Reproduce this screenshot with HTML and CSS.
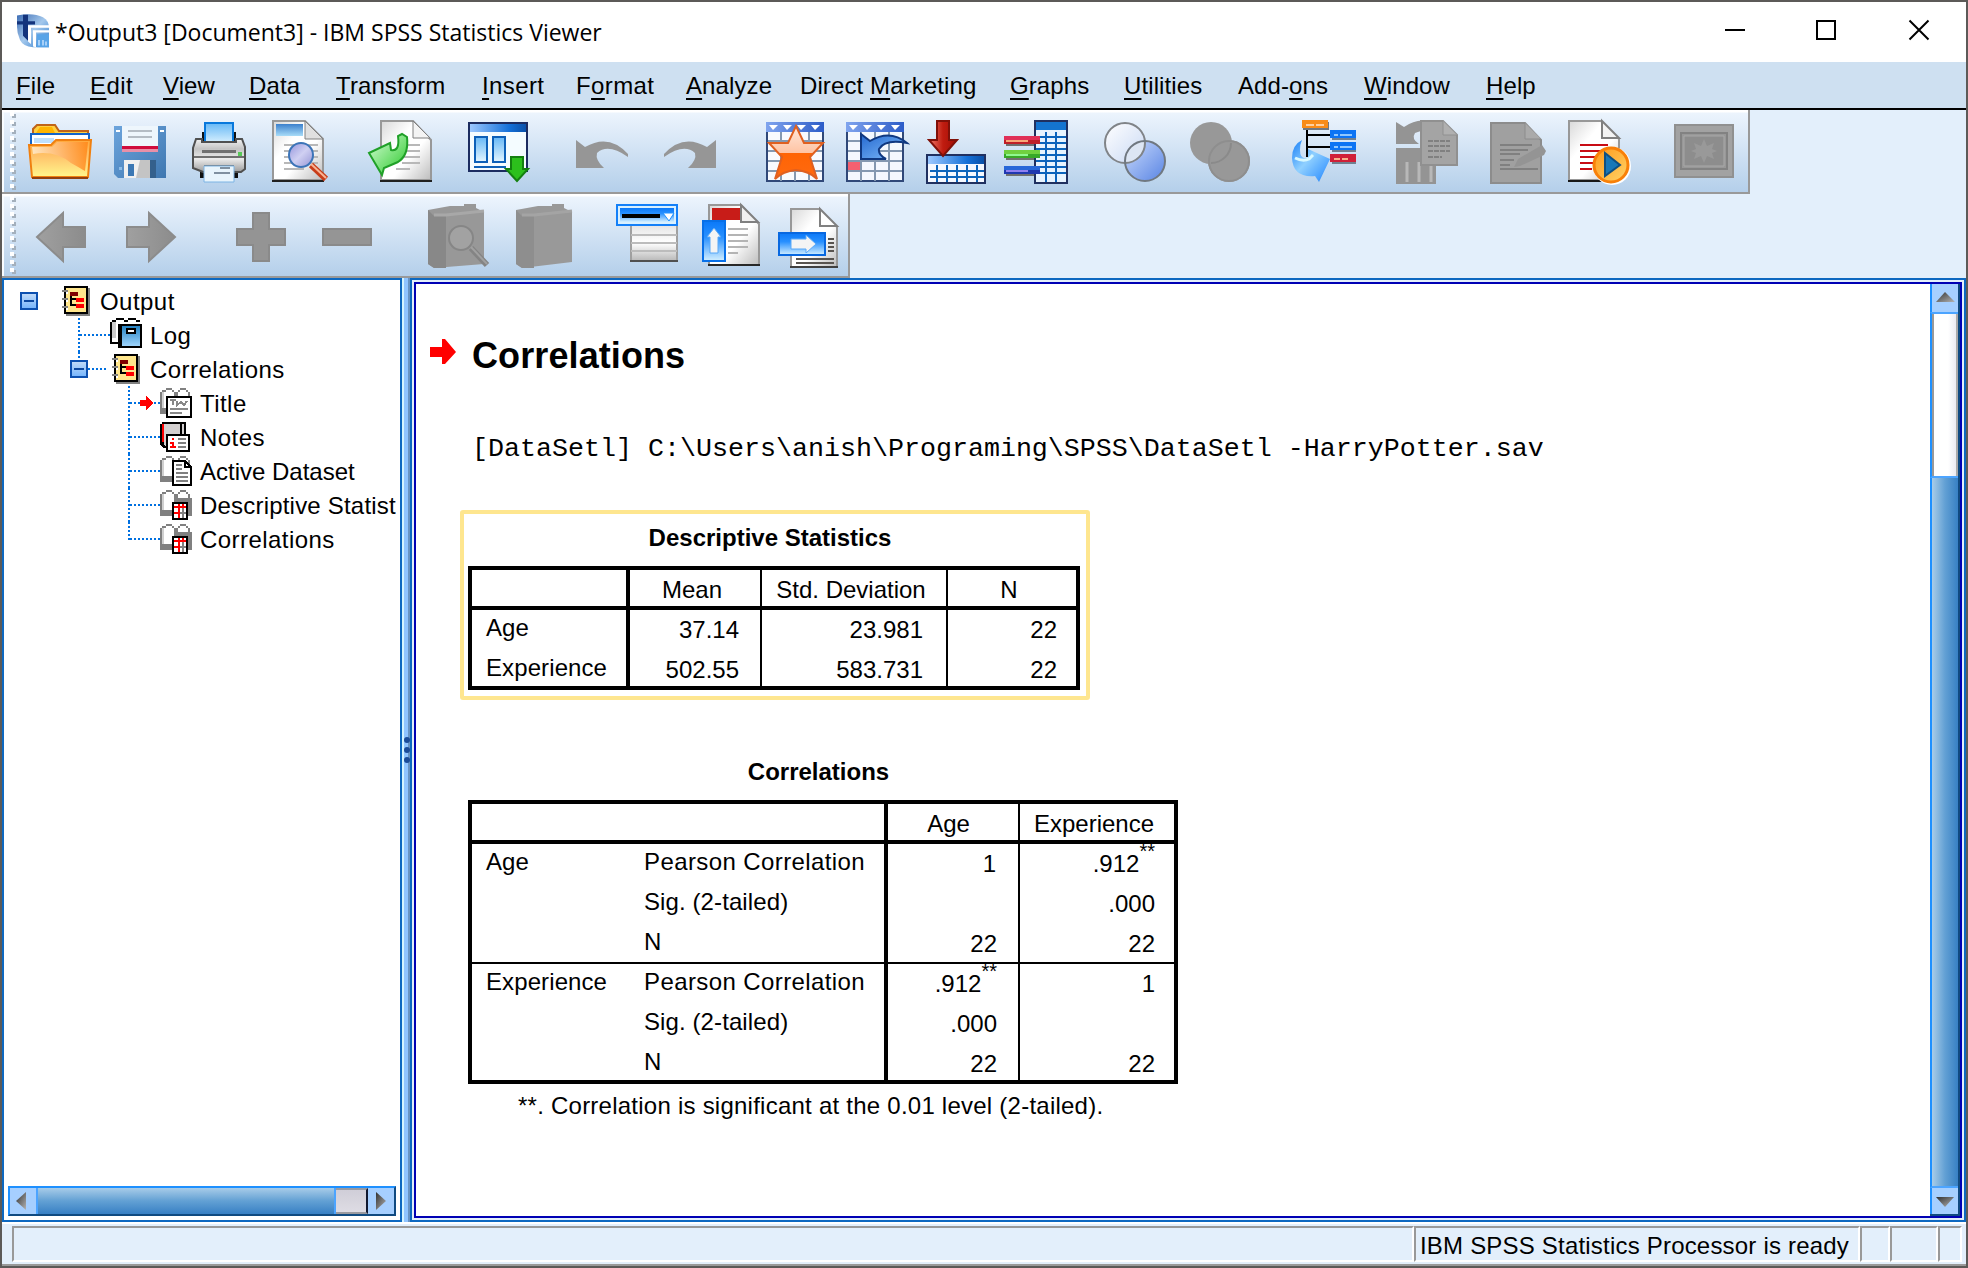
FILE: index.html
```html
<!DOCTYPE html>
<html lang="en">
<head>
<meta charset="utf-8">
<title>*Output3 [Document3] - IBM SPSS Statistics Viewer</title>
<link rel="stylesheet" href="styles.css">
</head>
<body>
<svg class="defs" width="0" height="0" aria-hidden="true">
  <defs>
    <linearGradient id="gFolder" x1="0" y1="0" x2="0" y2="1"><stop offset="0" stop-color="#ffa83a"/><stop offset=".45" stop-color="#ffc46c"/><stop offset="1" stop-color="#fff78c"/></linearGradient>
    <linearGradient id="gFlame" x1="0" y1="0" x2="1" y2="0"><stop offset="0" stop-color="#fff0d8"/><stop offset="1" stop-color="#ff8414"/></linearGradient>
    <linearGradient id="gDisk" x1="0" y1="0" x2="1" y2="1"><stop offset="0" stop-color="#6ca4dc"/><stop offset="1" stop-color="#3f77b0"/></linearGradient>
    <linearGradient id="gPaper" x1="0" y1="0" x2="1" y2="1"><stop offset="0" stop-color="#d8d8d8"/><stop offset=".35" stop-color="#ffffff"/><stop offset=".6" stop-color="#ffffff"/><stop offset="1" stop-color="#bcbcbc"/></linearGradient>
    <linearGradient id="gSheet" x1="0" y1="0" x2="0" y2="1"><stop offset="0" stop-color="#66b8f6"/><stop offset="1" stop-color="#e4f6ff"/></linearGradient>
    <linearGradient id="gPrinter" x1="0" y1="0" x2="0" y2="1"><stop offset="0" stop-color="#f2f2f2"/><stop offset=".3" stop-color="#c4c4c4"/><stop offset=".6" stop-color="#ececec"/><stop offset="1" stop-color="#9c9c9c"/></linearGradient>
    <linearGradient id="gBlue" x1="0" y1="0" x2="1" y2="0"><stop offset="0" stop-color="#9cc8ff"/><stop offset=".7" stop-color="#1470d8"/><stop offset="1" stop-color="#0a50a8"/></linearGradient>
    <linearGradient id="gThumbnail" x1="0" y1="0" x2="0" y2="1"><stop offset="0" stop-color="#3c80cc"/><stop offset="1" stop-color="#a8dcf8"/></linearGradient>
    <linearGradient id="gHead" x1="0" y1="0" x2="1" y2="0"><stop offset="0" stop-color="#80a4ee"/><stop offset="1" stop-color="#2c5cc8"/></linearGradient>
    <linearGradient id="gGreen" x1="0" y1="0" x2="1" y2="1"><stop offset="0" stop-color="#dcffdc"/><stop offset="1" stop-color="#28c828"/></linearGradient>
    <linearGradient id="gLens" x1="0" y1="0" x2="1" y2="1"><stop offset="0" stop-color="#9494dc"/><stop offset=".5" stop-color="#d0d0f2"/><stop offset="1" stop-color="#9494d4"/></linearGradient>
    <linearGradient id="gStar" x1="0" y1="0" x2="0" y2="1"><stop offset="0" stop-color="#ffe8dc"/><stop offset=".5" stop-color="#ffc4a4"/><stop offset=".51" stop-color="#ff6404"/><stop offset="1" stop-color="#ff6a10"/></linearGradient>
    <linearGradient id="gArrow" x1="0" y1="0" x2="1" y2="1"><stop offset="0" stop-color="#2468d0"/><stop offset="1" stop-color="#84c0fc"/></linearGradient>
    <linearGradient id="gRed" x1="0" y1="0" x2="1" y2="0"><stop offset="0" stop-color="#f07868"/><stop offset=".5" stop-color="#c01c10"/><stop offset="1" stop-color="#a00c04"/></linearGradient>
    <linearGradient id="gVennA" x1="0" y1="0" x2="1" y2="1"><stop offset="0" stop-color="#ffffff"/><stop offset="1" stop-color="#c8d8f4"/></linearGradient>
    <linearGradient id="gVennB" x1="0" y1="0" x2="1" y2="1"><stop offset="0" stop-color="#ccdcfc"/><stop offset="1" stop-color="#5884e4"/></linearGradient>
    <linearGradient id="gSwoop" x1="0" y1="0" x2="1" y2="1"><stop offset="0" stop-color="#1880f8"/><stop offset=".45" stop-color="#90d0ff"/><stop offset=".8" stop-color="#48a0ff"/><stop offset="1" stop-color="#1470e8"/></linearGradient>
    <linearGradient id="gPane" x1="0" y1="0" x2="0" y2="1"><stop offset="0" stop-color="#0a78f8"/><stop offset=".4" stop-color="#2890ff"/><stop offset="1" stop-color="#d4f0ff"/></linearGradient>
    <linearGradient id="gRow" x1="0" y1="0" x2="0" y2="1"><stop offset="0" stop-color="#e4e4e4"/><stop offset=".5" stop-color="#ffffff"/><stop offset="1" stop-color="#b8b8b8"/></linearGradient>
    <linearGradient id="gGray" x1="0" y1="0" x2="1" y2="0"><stop offset="0" stop-color="#a0a0a0"/><stop offset="1" stop-color="#8c8c8c"/></linearGradient>
    <linearGradient id="gTri" x1="0" y1="0" x2="1" y2="1"><stop offset="0" stop-color="#303030"/><stop offset="1" stop-color="#b4b4b4"/></linearGradient>
    <linearGradient id="gOrb" x1="0" y1="0" x2="1" y2="1"><stop offset="0" stop-color="#ff9818"/><stop offset="1" stop-color="#ffd468"/></linearGradient>
    <linearGradient id="gLogo" x1="0" y1="0" x2="1" y2="1"><stop offset="0" stop-color="#3c6cb4"/><stop offset=".5" stop-color="#a4c8ec"/><stop offset="1" stop-color="#2878cc"/></linearGradient>
    <linearGradient id="gLog" x1="0" y1="0" x2="0" y2="1"><stop offset="0" stop-color="#2080c0"/><stop offset="1" stop-color="#a4d8ff"/></linearGradient>
    <linearGradient id="gBox" x1="0" y1="0" x2="0" y2="1"><stop offset="0" stop-color="#c4dcf8"/><stop offset="1" stop-color="#74b4fc"/></linearGradient>
    <pattern id="pGrip" width="18" height="8" patternUnits="userSpaceOnUse"><path d="M6 0h4v4H6z" fill="#fff"/><path d="M10 2h2v4H8V4h2z" fill="#a4b0bc"/></pattern>

    <symbol id="toggle" viewBox="0 0 18 18"><path d="M1 1h16v16H1z" fill="url(#gBox)" stroke="#0c50b0" stroke-width="2"/><path d="M4 8h10v2H4z" fill="#0c48a0"/></symbol>
    <symbol id="notebook" viewBox="0 0 28 30">
      <path d="M4 2h24v28H4z" fill="#808080"/><path d="M3 1h22v26H3z" fill="#ffe68c" stroke="#000" stroke-width="2"/>
      <path d="M0 4h6v2H0zM0 12h6v2H0zM0 20h6v2H0z" fill="#808080"/><path d="M4 6h2v2H4zM4 14h2v2H4zM4 22h2v2H4z" fill="#fff"/>
      <path d="M8 6h8v4H8z" fill="#800000"/><path d="M8 10h2v8H8zM8 12h6v2H8zM8 18h6v2H8z" fill="#000"/><path d="M14 12h8v4h-8zM14 18h8v4h-8z" fill="#f00"/>
    </symbol>
    <symbol id="openbook" viewBox="0 0 32 30">
      <path d="M1 4h4V2h6v2h4v2h2V4h4V2h6v2h3v22H1z" fill="#fff"/>
      <path d="M0 4h2v20H0zM2 2h4v2H2zM6 0h6v2H6zM12 2h2v2h-2zM14 4h4v16h-4zM18 2h2v2h-2zM20 0h6v2h-6zM26 2h2v2h-2zM28 4h2v20h-2zM0 20h12v6H0z" fill="#808080"/><path d="M2 4h2v16H2z" fill="#d0d0d0"/>
    </symbol>
    <symbol id="tablebook" viewBox="0 0 32 30">
      <use href="#openbook" width="32" height="30"/><path d="M14 8h18v18H14z" fill="#808080"/>
      <path d="M13 13h14v16H13z" fill="#fff" stroke="#000" stroke-width="2"/><path d="M14 16h12v2H14zM14 22h8v2h-8zM18 14h2v14h-2zM22 14h2v4h-2z" fill="#f00"/><path d="M22 18h2v10h-2zM20 22h6v2h-6z" fill="#808080"/>
    </symbol>
    <symbol id="branch" viewBox="0 0 36 34"><path d="M1 0V34M2 17H32" fill="none" stroke="#0070e0" stroke-width="2" stroke-dasharray="2 2"/></symbol>
    <symbol id="lastbranch" viewBox="0 0 36 34"><path d="M1 0V18M2 17H32" fill="none" stroke="#0070e0" stroke-width="2" stroke-dasharray="2 2"/></symbol>
  </defs>
</svg>

<div class="window">
  <header class="titlebar">
    <svg class="logo" width="34" height="34" viewBox="18 18 34 42" preserveAspectRatio="none">
      <path d="M18 20q16-4 26 2q6 4 6 14v23H34q-10-1-13-9q-3-8-3-16z" fill="url(#gLogo)"/>
      <path d="M24 19h5v8h7v4h-7v20l-5-6V31h-6v-4h6z" fill="#14347c"/><path d="M50 35H32v20l-3-3V32h21zM50 41H37v18l-3-1V38h16z" fill="#fff"/><path d="M38 43h12v16H38z" fill="#58a4e8"/><path d="M40 50v7M44 50v7M47 52v5" stroke="#a8d0f8" stroke-width="2"/>
    </svg>
    <h1 class="window-title">*Output3 [Document3] - IBM SPSS Statistics Viewer</h1>
    <svg class="controls" width="230" height="60" viewBox="1720 0 230 60" fill="none" stroke="#000" stroke-width="2"><path d="M1725 30H1745M1817 21h18v18h-18zM1909.500 20.500l19 19m0-19l-19 19"/></svg>
  </header>

  <nav class="menubar">
    <span><u>F</u>ile</span><span class="airy"><u>E</u>dit</span><span><u>V</u>iew</span><span><u>D</u>ata</span><span><u>T</u>ransform</span><span class="airy"><u>I</u>nsert</span><span class="airy">F<u>o</u>rmat</span><span><u>A</u>nalyze</span><span>Direct <u>M</u>arketing</span><span><u>G</u>raphs</span><span><u>U</u>tilities</span><span>Add-<u>o</u>ns</span><span><u>W</u>indow</span><span><u>H</u>elp</span>
  </nav>

  <div class="toolbar toolbar-main">
    <svg class="grip" width="16" height="80"><path d="M0 0h16v80H0z" fill="url(#pGrip)"/></svg>
    <svg width="80" height="80" viewBox="20 112 80 80">
      <path d="M33 143V129l4-4h18l4 6h29v12z" fill="#ffd040" stroke="#c06418" stroke-width="2"/><path d="M40 127h12l3 6H36z" fill="#ffb400"/>
      <path d="M31 134h58v20H31z" fill="#fff" stroke="#1464c8" stroke-width="2"/><path d="M34 138h20v5H34z" fill="#c0e0fc"/>
      <path d="M29 145h22l5-5h35l-3 37H32z" fill="url(#gFolder)" stroke="#f08010" stroke-width="2"/><path d="M33 154q22-4 38 9q9 5 14 8l3-29H57l-5 5H32z" fill="url(#gFlame)" opacity=".8"/><path d="M32 178h56" stroke="#904010" stroke-width="2"/>
    </svg>
    <svg width="80" height="80" viewBox="100 112 80 80">
      <path d="M114 126h52v52h-48l-4-4z" fill="url(#gDisk)"/><path d="M122 126h36v20h-36z" fill="#eef6fc"/><path d="M128 130h24v2h-24zM128 136h24v2h-24z" fill="#b4bcc4"/><path d="M122 146h36v3h-36z" fill="#d00c3c"/><path d="M122 149h36v3h-36z" fill="#e890a8"/>
      <path d="M124 160h28v18h-28z" fill="#f0f0f0"/><path d="M140 160h10v18h-14z" fill="#c4c4c4"/><path d="M128 164h6v12h-6z" fill="#3c78b4"/><path d="M150 160h6v18h-6z" fill="#34608c"/><path d="M116 130h4v2h-4zM160 130h4v2h-4z" fill="#fff"/><path d="M119 167h3v3h-3z" fill="#8cbce8"/>
    </svg>
    <svg width="80" height="80" viewBox="180 112 80 80">
      <path d="M202 132h34v12h-34zM200 168h38v10h-38z" fill="#101010"/><path d="M205 123h28v22h-28z" fill="url(#gSheet)" stroke="#0878dc" stroke-width="2"/>
      <path d="M196 139h6v3h34v-3h6l3 8v22l-4 3h-38l-10-4v-20z" fill="url(#gPrinter)" stroke="#505050" stroke-width="2"/><path d="M202 150h34v3h-34zM194 156h50v2h-50zM204 165h30v2h-30z" fill="#707070"/><path d="M238 152h4v4h-4z" fill="#58c858"/>
      <path d="M204 166h30v16h-30z" fill="#e8f4fc" stroke="#7cb4e4"/><path d="M220 168h10M214 173h16" stroke="#8090a0" stroke-width="2"/>
    </svg>
    <svg width="80" height="80" viewBox="260 112 80 80">
      <path d="M273 121h32l18 18v41h-50z" fill="url(#gPaper)" stroke="#989898" stroke-width="2"/><path d="M305 121v18h18z" fill="#e0e0e0" stroke="#808080"/><path d="M272 181h52" stroke="#202020" stroke-width="2"/><path d="M276 124h27v12h-27z" fill="url(#gThumbnail)"/>
      <path d="M284 145h34M284 151h34M284 157h34M284 163h34M284 169h20" stroke="#b8b8b8" stroke-width="2"/><circle cx="301" cy="155" r="12" fill="url(#gLens)" stroke="#3c74b8" stroke-width="2"/><path d="M311 165l15 14" stroke="#c83c18" stroke-width="6"/><path d="M311 164l15 14" stroke="#f8b494" stroke-width="2"/>
    </svg>
    <svg width="110" height="80" viewBox="340 112 110 80">
      <path d="M381 121h32l18 19v40h-50z" fill="url(#gPaper)" stroke="#989898" stroke-width="2"/><path d="M413 121v17h17z" fill="#f4f4f4" stroke="#808080"/><path d="M380 181h52" stroke="#202020" stroke-width="2"/><path d="M404 145h16M404 151h16M404 157h16M402 163h18M396 169h14" stroke="#b8b8b8" stroke-width="2"/>
      <path d="M369 153l21-10l1 7q9 2 7-14l4-2l5 3q2 18-9 25l-14 6l-2 7z" fill="url(#gGreen)" stroke="#20a028" stroke-width="2"/>
    </svg>
    <svg width="100" height="80" viewBox="450 112 100 80">
      <path d="M469 123h58v48h-58z" fill="#f4fcff" stroke="#1c2c60" stroke-width="2"/><path d="M470 124h56v8h-56z" fill="url(#gBlue)"/><path d="M475 137h12v25h-12zM493 137h12v25h-12z" fill="url(#gSheet)" stroke="#0c60b8" stroke-width="2"/><path d="M474 167h32" stroke="#0c60b8" stroke-width="2"/>
      <path d="M511 157h12v12h5l-11 12l-11-12h5z" fill="#2cc01c" stroke="#148010" stroke-width="2"/>
    </svg>
    <svg width="90" height="80" viewBox="550 112 90 80"><path d="M576 140l9 7q24-14 43 7v3q-20-14-31-4q-2 7 7 15h-28z" fill="#969696"/></svg>
    <svg width="100" height="80" viewBox="640 112 100 80"><path d="M716 140l-9 7q-24-14-43 7v3q20-14 31-4q2 7-7 15h28z" fill="#969696"/></svg>
    <svg width="90" height="80" viewBox="740 112 90 80">
      <path d="M767 123h56v58h-56z" fill="#f8fafe" stroke="#304878" stroke-width="2"/><path d="M781 132v49M795 132v49M809 132v49M768 141h54M768 151h54M768 161h54M768 171h54" stroke="#8498b0" stroke-width="2"/><path d="M766 122h58v10h-58z" fill="url(#gHead)"/><path d="M769 125h9l-5 5zM783 125h9l-5 5zM797 125h9l-5 5zM811 125h9l-5 5z" fill="#fff"/>
      <path d="M796 126l8 17h19l-13 14l7 22q-8-8-21-9q-13 1-21 9l7-22l-13-14h19z" fill="url(#gStar)" stroke="#e06020" stroke-width="2"/>
    </svg>
    <svg width="80" height="80" viewBox="830 112 80 80">
      <path d="M847 123h56v58h-56z" fill="#f4f8fe" stroke="#304878" stroke-width="2"/><path d="M861 132v49M875 132v49M889 132v49M848 141h54M848 151h54M848 161h54M848 171h54" stroke="#8498b0" stroke-width="2"/><path d="M846 122h58v10h-58z" fill="url(#gHead)"/><path d="M849 125h9l-5 5zM863 125h9l-5 5zM877 125h9l-5 5zM891 125h9l-5 5z" fill="#fff"/><path d="M848 162h12v8h-12z" fill="#f46070"/>
      <path d="M861 134l9 7q20-12 37 2q-22-4-28 6q-1 6 7 10h-25z" fill="url(#gArrow)" stroke="#103880" stroke-width="2"/>
    </svg>
    <svg width="80" height="80" viewBox="910 112 80 80">
      <path d="M927 155h58v28h-58z" fill="#f4f8ff" stroke="#203060" stroke-width="2"/><path d="M928 156h56v8h-56z" fill="url(#gBlue)"/><path d="M937 165v17M947 165v17M957 165v17M967 165v17M977 165v17M930 171h54M930 177h54" stroke="#0c64bc" stroke-width="2"/>
      <path d="M937 121h12v19h8l-14 16l-14-16h8z" fill="url(#gRed)" stroke="#801008" stroke-width="2"/>
    </svg>
    <svg width="90" height="80" viewBox="990 112 90 80">
      <path d="M1035 121h32v62h-32z" fill="#e8f4ff" stroke="#203060" stroke-width="2"/><path d="M1036 122h30v8h-30z" fill="#1474d0"/><path d="M1046 132v50M1056 132v50M1036 137h30M1036 143h30M1036 149h30M1036 155h30M1036 161h30M1036 167h30M1036 173h30" stroke="#0c64bc" stroke-width="2"/>
      <path d="M1006 144h28v2h-28zM1006 158h28v2h-28zM1006 174h28v2h-28z" fill="#707070"/><path d="M1004 136h36v4h-36z" fill="#e03058"/><path d="M1004 140h36v4h-36z" fill="#c02028"/><path d="M1006 140h22v2h-22z" fill="#f8a878"/><path d="M1004 150h36v4h-36z" fill="#70d040"/><path d="M1004 154h36v4h-36z" fill="#38a828"/><path d="M1006 154h22v2h-22z" fill="#90f890"/><path d="M1004 166h36v4h-36z" fill="#2868d8"/><path d="M1004 170h36v4h-36z" fill="#2038b0"/><path d="M1006 170h22v2h-22z" fill="#9080f0"/>
    </svg>
    <svg width="100" height="80" viewBox="1080 112 100 80"><circle cx="1125" cy="143" r="20" fill="url(#gVennA)"/><circle cx="1145" cy="161" r="20" fill="url(#gVennB)"/><path d="M1145 141a20 20 0 0 1-20 22a20 20 0 0 1 20-22z" fill="#dde6f4"/><circle cx="1125" cy="143" r="20" fill="none" stroke="#808488" stroke-width="2"/><circle cx="1145" cy="161" r="20" fill="none" stroke="#707880" stroke-width="2"/></svg>
    <svg width="100" height="80" viewBox="1180 112 100 80"><circle cx="1211" cy="143" r="21" fill="#989898"/><circle cx="1229" cy="161" r="21" fill="#989898"/><circle cx="1229" cy="161" r="20" fill="none" stroke="#8e8e8e" stroke-width="2"/><path d="M1211 163a20 20 0 0 0 20-20" fill="none" stroke="#8a8a8a" stroke-width="2"/></svg>
    <svg width="100" height="80" viewBox="1280 112 100 80">
      <path d="M1307 130v27M1307 135h24M1307 147h24" fill="none" stroke="#000" stroke-width="2"/><rect x="1303" y="122" width="26" height="8" fill="#707880"/><rect x="1302" y="120" width="26" height="8" fill="#f88c18"/><path d="M1306 125h18" stroke="#ffd0a0" stroke-width="2" stroke-dasharray="8 2"/>
      <path d="M1332 132h24v8h-24zM1332 144h24v8h-24zM1332 156h24v8h-24z" fill="#708090"/><path d="M1330 130h26v8h-26zM1330 142h26v8h-26z" fill="#0c74f4"/><path d="M1330 154h26v8h-26z" fill="#d02038"/><path d="M1334 135h18M1334 147h18" stroke="#90c8ff" stroke-width="2" stroke-dasharray="4 2 12"/><path d="M1334 159h14" stroke="#f8b088" stroke-width="2" stroke-dasharray="6 2"/>
      <path d="M1302 140q-10 5-10 18q1 20 23 18l4 6l11-23l-22-10v9q-8 2-8-8q0-6 2-10z" fill="url(#gSwoop)"/><path d="M1295 158q8 4 14 1l4-4" fill="none" stroke="#d8f8ff" stroke-width="3"/>
    </svg>
    <svg width="100" height="80" viewBox="1380 112 100 80">
      <path d="M1396 148h40v36h-40z" fill="#949494"/><path d="M1407 162v20M1419 162v20M1431 162v20" stroke="#b8b8b8" stroke-width="3"/><path d="M1396 122l8 5q20-14 38 2l-3 6q-12-8-24-2q-4 6 4 11h-23z" fill="#949494"/>
      <path d="M1421 121h22l14 14v30h-36z" fill="#a4a4a4" stroke="#909090" stroke-width="2"/><path d="M1443 121v14h14" fill="#b0b0b0" stroke="#909090"/><path d="M1428 141h22M1428 146h22M1428 151h22M1428 157h14" stroke="#808080" stroke-width="2" stroke-dasharray="5 1"/>
    </svg>
    <svg width="80" height="80" viewBox="1480 112 80 80">
      <path d="M1491 123h34l16 17v43h-50z" fill="#a0a0a0" stroke="#8c8c8c" stroke-width="2"/><path d="M1525 123v16h16" fill="#aaa" stroke="#8c8c8c"/><path d="M1500 145h32M1500 150h28M1500 154h20M1500 160h14M1500 165h10" stroke="#808080" stroke-width="2"/><path d="M1500 169h38" stroke="#808080" stroke-width="2"/><path d="M1542 145l4 6-2 4-24 11-6 1 4-8z" fill="#949494"/>
    </svg>
    <svg width="90" height="80" viewBox="1560 112 90 80">
      <path d="M1569 121h32l18 18v41h-50z" fill="url(#gPaper)" stroke="#989898" stroke-width="2"/><path d="M1602 121v17h17z" fill="#f4f4f4" stroke="#808080" stroke-width="2"/><path d="M1568 181h34" stroke="#181818" stroke-width="2"/><path d="M1580 145h28" stroke="#c80c14" stroke-width="2"/><path d="M1580 151h22M1580 157h18M1580 163h16M1580 169h12" stroke="#c80c14" stroke-width="2"/>
      <circle cx="1612" cy="166" r="19" fill="#fff"/><circle cx="1611" cy="165" r="17" fill="url(#gOrb)" stroke="#f88008" stroke-width="3"/><path d="M1605 153l15 12-15 11z" fill="#1878b8" stroke="#105080" stroke-width="2"/>
    </svg>
    <svg width="98" height="80" viewBox="1650 112 98 80"><path d="M1675 125h58v52h-58z" fill="#a2a2a2" stroke="#909090" stroke-width="2"/><path d="M1681 133h46v36h-46z" fill="#989898" stroke="#828282" stroke-width="2"/><path d="M1684 136h40v30h-40z" fill="#8d8d8d" stroke="#a8a8a8"/><path d="M1704 139l3 7 7-3-2 6 5 2-5 2 2 6-7-3-3 7-3-7-7 3 2-6-5-2 5-2-2-6 7 3z" fill="#999"/></svg>
  </div>

  <div class="toolbar toolbar-outline">
    <svg class="grip" width="16" height="80"><path d="M0 0h16v80H0z" fill="url(#pGrip)"/></svg>
    <svg width="86" height="80" viewBox="20 196 86 80"><path d="M37 237l26-24v14h22v20H63v14z" fill="url(#gGray)" stroke="#8c8c8c" stroke-width="2"/></svg>
    <svg width="90" height="80" viewBox="106 196 90 80"><path d="M127 227h22v-14l26 24-26 24v-14h-22z" fill="url(#gGray)" stroke="#8c8c8c" stroke-width="2"/></svg>
    <svg width="104" height="80" viewBox="196 196 104 80"><path d="M253 213h16v16h16v16h-16v16h-16v-16h-16v-16h16z" fill="#949494" stroke="#8a8a8a" stroke-width="2"/></svg>
    <svg width="100" height="80" viewBox="300 196 100 80"><path d="M323 229h48v16h-48z" fill="#959595" stroke="#8a8a8a" stroke-width="2"/></svg>
    <svg width="100" height="80" viewBox="400 196 100 80"><path d="M428 210l22-4h14v-2h12v4l8 4v52l-50 4-6-4z" fill="#989898"/><path d="M428 210l6 6h12v52h-12l-6-4z" fill="#888"/><path d="M434 215h12l38-4" fill="none" stroke="#a8a8a8" stroke-width="3"/><circle cx="461" cy="238" r="12" fill="#a2a2a2" stroke="#868686" stroke-width="2"/><path d="M471 248l16 17" stroke="#848484" stroke-width="6"/><path d="M471 247l16 17" stroke="#a0a0a0" stroke-width="2"/></svg>
    <svg width="100" height="80" viewBox="500 196 100 80"><path d="M516 210l22-4h14v-2h12v4l8 4v50l-50 6-6-4z" fill="#999"/><path d="M516 210l6 6h12v52h-12l-6-4z" fill="#8e8e8e"/><path d="M522 215h12l38-4" fill="none" stroke="#a4a4a4" stroke-width="3"/></svg>
    <svg width="90" height="80" viewBox="600 196 90 80"><path d="M631 225h46v36h-46z" fill="url(#gRow)" stroke="#a0a0a0" stroke-width="2"/><path d="M631 235h46M631 243h46M631 251h46" stroke="#bcbcbc" stroke-width="2"/><path d="M630 261h48" stroke="#505050" stroke-width="2"/><path d="M617 205h60v20h-60z" fill="#d8f0ff" stroke="#1480f8" stroke-width="2"/><path d="M620 208h54v14h-54z" fill="url(#gPane)"/><path d="M622 214h38v4h-38z" fill="#000"/><path d="M663 213h11l-5 8z" fill="#fff" stroke="#2090ff"/></svg>
    <svg width="80" height="80" viewBox="690 196 80 80"><path d="M709 205h32l18 19v41h-50z" fill="url(#gPaper)" stroke="#989898" stroke-width="2"/><path d="M741 205v17h17z" fill="#f0f0f0" stroke="#808080" stroke-width="2"/><path d="M708 265h52" stroke="#282828" stroke-width="2"/><path d="M712 208h28v12h-28z" fill="#c81c18"/><path d="M728 229h20M728 235h20M728 241h20M728 247h20M728 253h10" stroke="#b4b4b4" stroke-width="2"/><path d="M703 221h22v40h-22z" fill="url(#gPane)" stroke="#0870e8" stroke-width="2"/><path d="M714 228l7 9h-3v16h-8v-16h-3z" fill="#f4f4f4" stroke="#58a8f8"/></svg>
    <svg width="78" height="80" viewBox="770 196 78 80"><path d="M791 209h28l18 18v40h-46z" fill="url(#gPaper)" stroke="#989898" stroke-width="2"/><path d="M820 209v17h17z" fill="#fff" stroke="#808080" stroke-width="2"/><path d="M790 267h48" stroke="#404040" stroke-width="2"/><path d="M796 259h38M796 263h38M828 239h6M828 243h6M828 247h6M828 251h6" stroke="#585450" stroke-width="2"/><path d="M779 233h46v22h-46z" fill="url(#gPane)" stroke="#0868e0" stroke-width="2"/><path d="M791 239h15v-4l10 9-10 9v-4h-15z" fill="#f4f4f4" stroke="#58a8f8"/></svg>
  </div>

  <main class="workspace">
    <aside class="outline">
      <ul class="tree">
        <li class="loose"><svg width="96" height="34" viewBox="4 0 96 34"><use href="#toggle" x="20" y="8" width="18" height="18"/><use href="#notebook" x="62" y="2" width="28" height="30"/></svg>Output</li>
        <li class="loose"><svg width="146" height="34" viewBox="4 0 146 34"><use href="#branch" x="78" width="36" height="34"/><path d="M112 4h4V2h4V0h8v2h4V0h6v4h2v24h-20l-2-4h-6z" fill="#fff"/><path d="M110 4h2v20h8v4h-2v-2h-8zM112 2h4v2h-4zM116 0h8v2h-8zM124 2h4v2h-4zM128 0h8v2h-8zM136 2h4v2h-4z" fill="#000"/><path d="M112 4h4v16h-4z" fill="#ccc"/><path d="M121 7h20v22h-20z" fill="url(#gLog)" stroke="#000" stroke-width="2"/><path d="M118 6h4v24h-4z" fill="#000"/><path d="M127 11h8v4h-8z" fill="#fff" stroke="#000" stroke-width="2"/></svg>Log</li>
        <li class="loose"><svg width="146" height="34" viewBox="4 0 146 34"><path d="M79 0v8M88 17h18" stroke="#0070e0" stroke-width="2" stroke-dasharray="2 2"/><use href="#toggle" x="70" y="8" width="18" height="18"/><use href="#notebook" x="112" y="2" width="28" height="30"/></svg>Correlations</li>
        <li class="loose"><svg width="196" height="34" viewBox="4 0 196 34"><use href="#branch" x="128" width="36" height="34"/><path d="M140 14h6v-4l8 7-8 7v-4h-6z" fill="#f00"/><use href="#openbook" x="160" y="2" width="32" height="30"/><path d="M167 11h24v20h-24z" fill="#fff" stroke="#000" stroke-width="2"/><path d="M170 14h6M173 15v4M177 15v4l4-3 3 3 3-4M170 23h18M170 27h12" fill="none" stroke="#888" stroke-width="2"/></svg>Title</li>
        <li class="loose"><svg width="196" height="34" viewBox="4 0 196 34"><use href="#branch" x="128" width="36" height="34"/><path d="M163 3h22v24h-20l-2-2z" fill="#d4d0d0" stroke="#000" stroke-width="2"/><path d="M161 4v20l4 4" fill="none" stroke="#000" stroke-width="2"/><path d="M162 4h2v18h-2z" fill="#f00"/><path d="M180 4h2v10h-2z" fill="#000"/><path d="M167 15h22v16h-22z" fill="#fff" stroke="#000" stroke-width="2"/><path d="M172 18h2v2h-2zM170 22h4v4h2v2h-6v-2h2v-2h-2z" fill="#f00"/><path d="M178 19h8M178 23h8M178 27h8" stroke="#808080" stroke-width="2"/></svg>Notes</li>
        <li><svg width="196" height="34" viewBox="4 0 196 34"><use href="#branch" x="128" width="36" height="34"/><use href="#openbook" x="160" y="2" width="32" height="30"/><path d="M173 7h12l6 6v18h-18z" fill="#fff" stroke="#000" stroke-width="2"/><path d="M185 7v6h6" fill="none" stroke="#000" stroke-width="2"/><path d="M176 11h6M176 15h6M176 19h12M176 23h12M176 27h12" stroke="#808080" stroke-width="2"/></svg>Active Dataset</li>
        <li class="medium"><svg width="196" height="34" viewBox="4 0 196 34"><use href="#branch" x="128" width="36" height="34"/><use href="#tablebook" x="160" y="2" width="32" height="30"/></svg>Descriptive Statist</li>
        <li class="loose"><svg width="196" height="34" viewBox="4 0 196 34"><use href="#lastbranch" x="128" width="36" height="34"/><use href="#tablebook" x="160" y="2" width="32" height="30"/></svg>Correlations</li>
      </ul>
      <div class="scroll-h">
        <svg class="btn" width="26" height="26" viewBox="0 0 26 26"><path d="M6 13l10-9v18z" fill="url(#gTri)"/></svg>
        <i class="track"></i><i class="thumb"></i>
        <svg class="btn" width="26" height="26" viewBox="0 0 26 26"><path d="M18 13L8 4v18z" fill="url(#gTri)"/></svg>
      </div>
    </aside>
    <div class="splitter"><i></i><i></i><i></i></div>
    <section class="viewer">
      <div class="page">
        <div class="heading"><svg width="28" height="28" viewBox="0 0 28 28"><path d="M0 9h12V1h3l11 13-11 12h-3v-7H0z" fill="#f00"/></svg><h2>Correlations</h2></div>
        <pre class="log">[DataSetl] C:\Users\anish\Programing\SPSS\DataSetl -HarryPotter.sav</pre>
        <div class="selected">
          <h3>Descriptive Statistics</h3>
          <table class="pivot stats">
            <colgroup><col class="c158"><col class="c132"><col class="c186"><col class="c128"></colgroup>
            <tr class="head"><th class="stub"></th><th>Mean</th><th>Std. Deviation</th><th>N</th></tr>
            <tr><td class="label stub">Age</td><td>37.14</td><td class="wide">23.981</td><td>22</td></tr>
            <tr class="last"><td class="label stub">Experience</td><td>502.55</td><td class="wide">583.731</td><td>22</td></tr>
          </table>
        </div>
        <div class="correlations">
          <h3>Correlations</h3>
          <table class="pivot corr">
            <colgroup><col class="c160"><col class="c256"><col class="c132"><col class="c154"></colgroup>
            <tr class="head"><th class="stub" colspan="2"></th><th class="age">Age</th><th>Experience</th></tr>
            <tr><td class="label">Age</td><td class="label stub">Pearson Correlation</td><td class="one">1</td><td>.912<sup>**</sup></td></tr>
            <tr><td class="label"></td><td class="label stub tight">Sig. (2-tailed)</td><td></td><td>.000</td></tr>
            <tr class="rule"><td class="label"></td><td class="label stub">N</td><td>22</td><td>22</td></tr>
            <tr><td class="label">Experience</td><td class="label stub">Pearson Correlation</td><td>.912<sup>**</sup></td><td>1</td></tr>
            <tr><td class="label"></td><td class="label stub tight">Sig. (2-tailed)</td><td>.000</td><td></td></tr>
            <tr class="last"><td class="label"></td><td class="label stub">N</td><td>22</td><td>22</td></tr>
          </table>
          <p class="footnote">**. Correlation is significant at the 0.01 level (2-tailed).</p>
        </div>
      </div>
      <div class="scroll-v">
        <svg class="btn" width="26" height="28" viewBox="0 0 26 28"><path d="M13 8l10 10H4z" fill="url(#gTri)"/></svg>
        <i class="thumb"></i><i class="track"></i>
        <svg class="btn" width="26" height="26" viewBox="0 0 26 26"><path d="M4 9h18l-9 10z" fill="url(#gTri)"/></svg>
      </div>
    </section>
  </main>

  <footer class="statusbar"><span class="message"></span><span class="processor">IBM SPSS Statistics Processor is ready</span><span class="cell-a"></span><span class="cell-b"></span><span class="cell-c"></span></footer>
</div>
</body>
</html>
```
FILE: styles.css
```css
* { box-sizing: border-box; }
body { margin: 0; background: #e3effb; font: 24px/1 "Liberation Sans", Arial, sans-serif; color: #000; overflow: hidden; }
svg { display: block; flex: none; }
.defs { position: absolute; }

.window { width: 1968px; height: 1268px; display: flex; flex-direction: column; border: 2px solid #5c5a58; background: #e3effb; }

.titlebar { height: 60px; flex: none; display: flex; align-items: center; background: #fff; padding-left: 15px; }
.logo { margin-top: -2px; margin-right: 4px; }
.window-title { margin: 0; font: 400 23px/60px "Open Sans", "Noto Sans", sans-serif; white-space: pre; }
.controls { margin-left: auto; margin-right: 16px; margin-top: -4px; }

.menubar { height: 48px; flex: none; background: #cee0f1; border-bottom: 2px solid #000; padding-left: 14px; display: grid; grid-template-columns: 74px 73px 86px 87px 146px 94px 110px 114px 210px 114px 114px 126px 122px 100px; line-height: 47px; letter-spacing: .1px; white-space: pre; }
.menubar u { text-decoration: underline; text-decoration-thickness: 2px; text-underline-offset: 4px; text-decoration-skip-ink: none; }
.menubar .airy { letter-spacing: .4px; }

.toolbar { height: 84px; flex: none; display: flex; border: 2px solid #999; border-width: 0 2px 2px 0; padding-top: 2px; background: linear-gradient(#fff 0 2px, #ecf4fd 3px, #b4cfea 100%); }
.toolbar-main { width: 1748px; }
.toolbar-outline { width: 848px; }
.grip { box-sizing: content-box; border-left: 2px solid #f8fcff; }

.workspace { height: 944px; flex: none; display: flex; }
.outline { width: 400px; border: 2px solid #0d68c0; background: #fff; padding: 4px 4px 4px 0; display: flex; flex-direction: column; }
.tree { list-style: none; margin: 0; padding: 0; overflow: hidden; }
.tree li { height: 34px; display: flex; line-height: 35px; white-space: pre; }
.tree .loose { letter-spacing: .45px; }
.tree .medium { letter-spacing: .2px; }
.tree use, .tree path { shape-rendering: crispEdges; }

.btn { background: #a6cfff; }
.scroll-h { height: 30px; margin: auto 0 0 4px; display: flex; border: 2px solid #1e90ff; border-right-color: #104a80; border-bottom-color: #104a80; }
.scroll-h .track { flex: 1; border: 2px solid #4ca4ff; border-width: 0 2px; background: linear-gradient(#a8cce8, #62a0d4 50%, #3880c4); }
.scroll-h .thumb { width: 32px; border: 2px solid #9a9aa0; border-width: 2px 2px 2px 0; border-right-color: #101830; background: linear-gradient(#d0ced8, #dedce4); }

.splitter { width: 8px; padding-left: 2px; background: linear-gradient(90deg, #d4f4ff 0 2px, #90c4ff 2px 6px, #6894c4 6px); display: flex; flex-direction: column; gap: 4px; align-items: center; justify-content: center; }
.splitter i { width: 6px; height: 6px; background: #1c4c98; border-radius: 3px; }

.viewer { width: 1556px; border: 2px solid #0d68c0; padding: 2px; display: flex; background: #e3effb; }
.page { flex: 1; background: #fff; border: 2px solid #0000b4; border-right: 0; padding: 54px 0 0 14px; min-width: 0; }
.scroll-v { width: 32px; border: 2px solid #0000b4; border-left: 0; background: #104a80; padding: 0 2px 2px 0; display: flex; flex-direction: column; }
.scroll-v > * { border-left: 2px solid #1e90ff; width: 28px; }
.scroll-v .thumb { height: 166px; border-top: 2px solid #4ca4ff; border-bottom: 2px solid #4ca4ff; background: linear-gradient(90deg, #999 2px, #fff 2px 16px, #ecebf2 24px, #aaa 24px); }
.scroll-v .track { flex: 1; border-bottom: 2px solid #4ca4ff; background: linear-gradient(90deg, #a8cce8, #62a0d4 50%, #3880c4); }

.heading { height: 36px; display: flex; }
h2 { margin: 0 0 0 14px; font: 700 36px/36px "Liberation Sans", Arial, sans-serif; letter-spacing: .1px; }
.log { margin: 60px 0 0 42px; font: 26.670px/30px "Liberation Mono", "Courier New", monospace; }

.selected { width: 630px; height: 190px; margin: 46px 0 0 30px; padding: 4px; border: 4px solid #fee68f; border-radius: 3px; }
h3 { margin: 0; height: 48px; font: 700 24px/39px "Liberation Sans", Arial, sans-serif; text-align: center; }
.selected h3 { margin-right: 10px; }

.pivot { table-layout: fixed; border-collapse: separate; border-spacing: 0; border: 4px solid #000; }
.c158 { width: 158px; } .c132 { width: 132px; } .c186 { width: 186px; } .c128 { width: 128px; } .c160 { width: 160px; } .c256 { width: 256px; } .c154 { width: 154px; }
.stats { width: 612px; }
.corr { width: 710px; }
.pivot tr { height: 40px; }
.pivot tr.last { height: 36px; }
.pivot th, .pivot td { padding: 4px 21px 0 0; line-height: 31px; font-weight: 400; text-align: right; vertical-align: top; white-space: nowrap; border-right: 2px solid #000; }
.pivot th { text-align: center; padding-right: 6px; border-bottom: 4px solid #000; }
.pivot th.age { padding-right: 9px; }
.pivot td.label { padding: 2px 0 0 14px; text-align: left; border-right: 0; letter-spacing: .1px; }
.pivot .stub, .pivot td.label.stub { border-right: 4px solid #000; }
.pivot th:last-child, .pivot td:last-child { border-right: 0; }
.pivot td:last-child { padding-right: 19px; }
.pivot td.wide { padding-right: 23px; }
.pivot td.one { padding-right: 22px; }
.pivot .rule td { border-bottom: 2px solid #000; }
.corr td.label.stub { padding-left: 12px; letter-spacing: .4px; }
.corr td.label.tight { letter-spacing: .1px; }
.pivot sup { font-size: 20px; line-height: 0; vertical-align: 14px; }

.correlations { width: 710px; margin: 52px 0 0 38px; }
.correlations h3 { padding-right: 9px; }
.footnote { margin: 6px 0 0 50px; line-height: 32px; letter-spacing: .24px; white-space: nowrap; }

.statusbar { flex: 1; display: flex; padding: 2px 4px 2px 10px; border-top: 2px solid #fff; border-bottom: 2px solid #999; }
.statusbar span { height: 36px; border: 2px solid #fff; border-top-color: #999; border-left-color: #999; line-height: 35px; white-space: nowrap; }
.message { width: 1402px; }
.processor { width: 446px; padding-left: 4px; letter-spacing: .2px; }
.cell-a { width: 30px; } .cell-b { width: 48px; } .cell-c { width: 24px; }
```
